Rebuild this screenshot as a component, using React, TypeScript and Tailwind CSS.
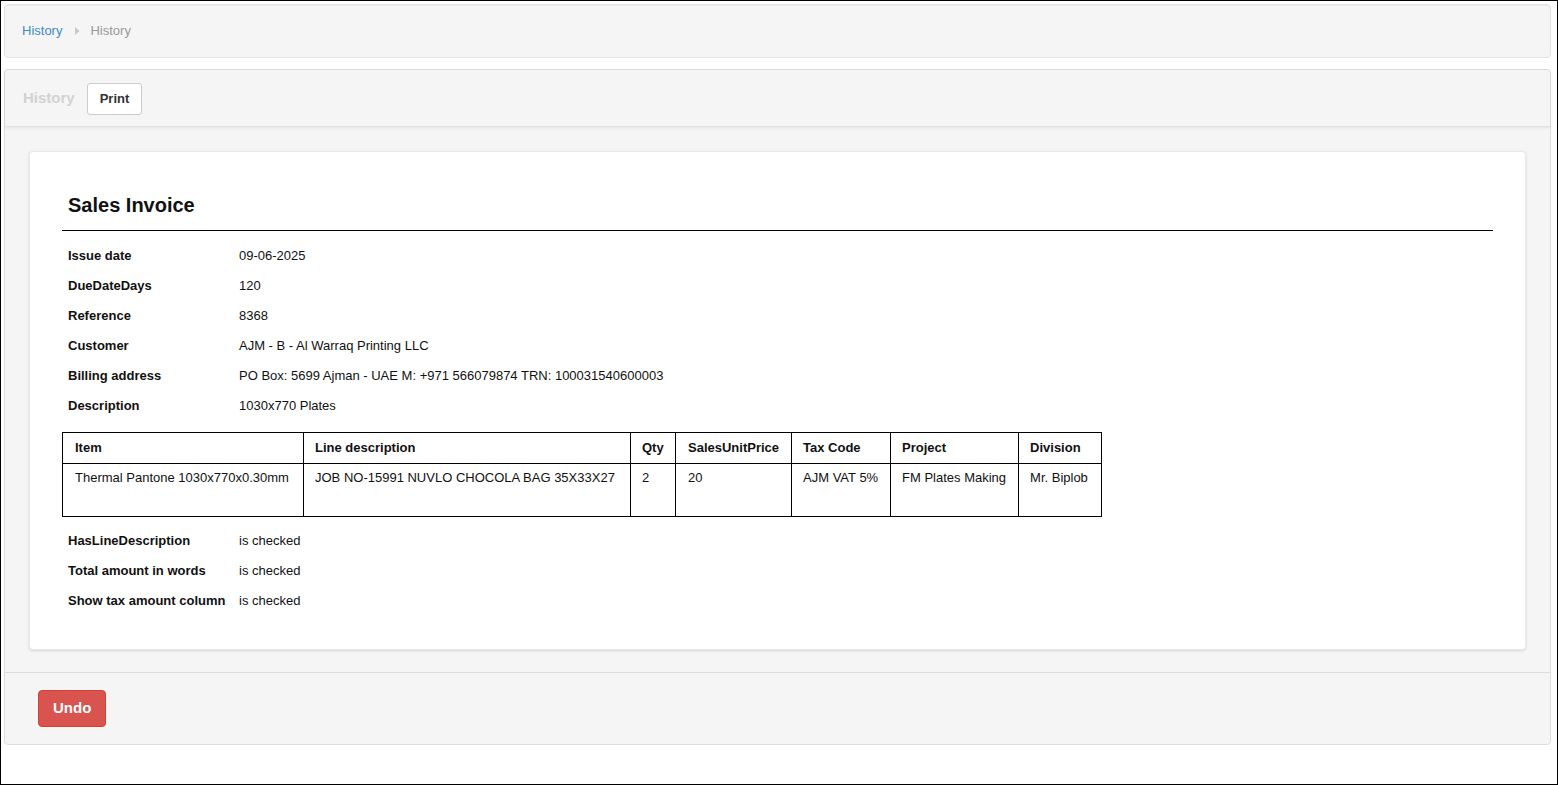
import React from 'react';

const fields: [string, string][] = [
  ['Issue date', '09-06-2025'],
  ['DueDateDays', '120'],
  ['Reference', '8368'],
  ['Customer', 'AJM - B - Al Warraq Printing LLC'],
  ['Billing address', 'PO Box: 5699 Ajman - UAE M: +971 566079874 TRN: 100031540600003'],
  ['Description', '1030x770 Plates'],
];

const flags: [string, string][] = [
  ['HasLineDescription', 'is checked'],
  ['Total amount in words', 'is checked'],
  ['Show tax amount column', 'is checked'],
];

const columns = [
  { title: 'Item', value: 'Thermal Pantone 1030x770x0.30mm', w: 'w-[241px]', px: 'px-[12px]' },
  { title: 'Line description', value: 'JOB NO-15991 NUVLO CHOCOLA BAG 35X33X27', w: 'w-[327px]', px: 'px-[11px]' },
  { title: 'Qty', value: '2', w: 'w-[45px]', px: 'px-[11px]' },
  { title: 'SalesUnitPrice', value: '20', w: 'w-[116px]', px: 'px-[12px]' },
  { title: 'Tax Code', value: 'AJM VAT 5%', w: 'w-[99px]', px: 'px-[11px]' },
  { title: 'Project', value: 'FM Plates Making', w: 'w-[128px]', px: 'px-[11px]' },
  { title: 'Division', value: 'Mr. Biplob', w: 'w-[83px]', px: 'px-[11px]' },
];

function FieldRow({ label, value }: { label: string; value: string }) {
  return (
    <div className="flex h-[30px] items-center px-[6px]">
      <span className="w-[171px] font-bold text-[#111]">{label}</span>
      <span className="text-[#111]">{value}</span>
    </div>
  );
}

export default function App() {
  return (
    <div className="h-[785px] w-[1558px] border border-black bg-white pb-[3px] pl-[3px] pr-[6px] pt-[3px] text-[13px] font-['Liberation_Sans',Arial,sans-serif]">
      <div className="flex h-[54px] items-center rounded border border-[#e3e3e3] bg-[#f5f5f5] px-[17px] shadow-[inset_0_1px_1px_rgba(0,0,0,0.05)]">
        <span className="text-[#428bca]">History</span>
        <svg width="8" height="10" viewBox="0 0 8 10" className="ml-[11px] mr-[9px]">
          <path d="M2 1 L6.5 5 L2 9 Z" fill="#c8c8c8" />
        </svg>
        <span className="text-[#999]">History</span>
      </div>

      <div className="mt-[11px] rounded border border-[#ddd] bg-[#f5f5f5]">
        <div className="flex h-[57px] items-center gap-[12px] border-b border-[#e3e3e3] px-[18px] shadow-[0_1px_3px_rgba(0,0,0,0.08)]">
          <span className="text-[15px] font-bold text-[#d2d2d2]">History</span>
          <button className="mt-[1px] h-[32px] rounded-[3px] border border-[#ccc] bg-white px-[12px] font-bold text-[#333]">
            Print
          </button>
        </div>

        <div className="px-[24px] pb-[22px] pt-[24px]">
          <div className="rounded border border-[#e8e8e8] bg-white px-[32px] pb-[33px] pt-[38px] shadow-[0_1px_3px_rgba(0,0,0,0.12)]">
            <div className="border-b border-black px-[6px] pb-[10px] text-[20px] font-bold text-[#111]">
              Sales Invoice
            </div>
            <div className="pt-[10px]">
              {fields.map(([l, v]) => (
                <FieldRow key={l} label={l} value={v} />
              ))}
            </div>
            <table className="mt-[11px] border-collapse border border-black text-[#111]">
              <thead>
                <tr>
                  {columns.map((c) => (
                    <th key={c.title} className={`${c.w} ${c.px} h-[31px] border border-black text-left align-middle font-bold`}>
                      {c.title}
                    </th>
                  ))}
                </tr>
              </thead>
              <tbody>
                <tr>
                  {columns.map((c) => (
                    <td key={c.title} className={`${c.px} h-[53px] border border-black pt-[4px] align-top whitespace-nowrap`}>
                      {c.value}
                    </td>
                  ))}
                </tr>
              </tbody>
            </table>
            <div className="pt-[9px]">
              {flags.map(([l, v]) => (
                <FieldRow key={l} label={l} value={v} />
              ))}
            </div>
          </div>
        </div>

        <div className="flex h-[72px] items-center border-t border-[#ddd] px-[33px]">
          <button className="h-[37px] rounded-[4px] border border-[#d43f3a] bg-[#d9534f] px-[14px] text-[15px] font-bold text-white">
            Undo
          </button>
        </div>
      </div>
    </div>
  );
}
